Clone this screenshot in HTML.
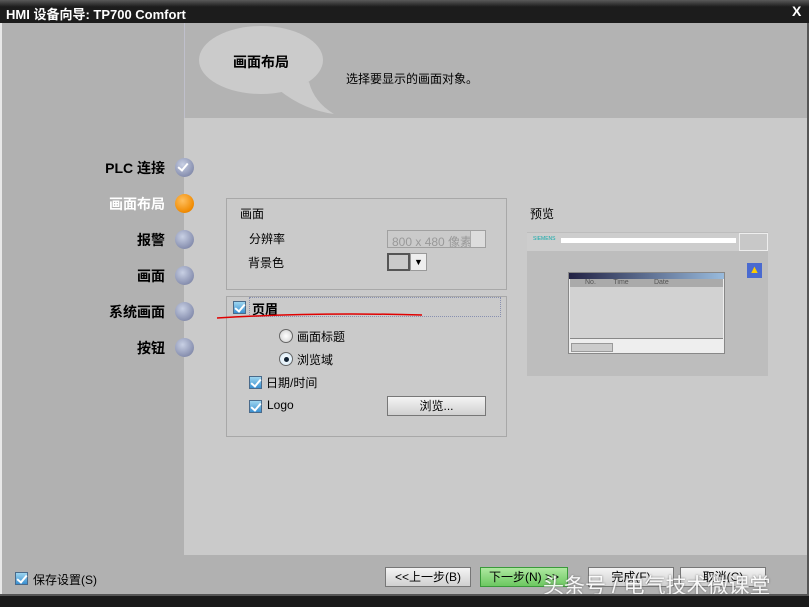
<!DOCTYPE html>
<html><head><meta charset="utf-8"><style>
*{margin:0;padding:0;box-sizing:border-box}
body{width:809px;height:607px;position:relative;overflow:hidden;background:#b1b1b1;font-family:"Liberation Sans","Noto Sans CJK SC",sans-serif;font-size:12px;color:#000}
.a{position:absolute}
.cb{position:absolute;width:13px;height:13px;border:1px solid #4a6a8a;background:linear-gradient(#9ed6f0,#3a8fd0);}
.cb:after{content:"";position:absolute;left:3px;top:0px;width:4px;height:8px;border:solid #fff;border-width:0 2px 2px 0;transform:rotate(40deg)}
.dot{position:absolute;width:19px;height:19px;border-radius:50%;background:radial-gradient(circle at 40% 35%,#c8d0e4,#8890b0 70%,#6a7090)}
.step{position:absolute;right:644px;font-weight:bold;font-size:14px;text-align:right;white-space:nowrap}
.btn{position:absolute;height:20px;border:1px solid #777;background:linear-gradient(#f4f4f4,#d0d0d0);text-align:center;line-height:18px;font-size:12px}
</style></head><body>
<div class="a" style="left:0;top:0;width:809px;height:23px;background:linear-gradient(#5a5a5a,#1c1c1c 30%,#1c1c1c)"></div>
<div class="a" style="left:6px;top:4px;color:#fff;font-weight:bold;font-size:13px">HMI 设备向导: TP700 Comfort</div>
<div class="a" style="left:792px;top:3px;color:#fff;font-weight:bold;font-size:14px">X</div>
<div class="a" style="left:0;top:23px;width:2px;height:571px;background:#e8e8e8"></div>
<div class="a" style="left:807px;top:23px;width:2px;height:571px;background:#555"></div>
<div class="a" style="left:184px;top:23px;width:623px;height:95px;background:#b3b3b3;border-left:1px solid #c0c0cc"></div>
<svg class="a" style="left:184px;top:24px" width="160" height="92"><ellipse cx="77" cy="36" rx="62" ry="34" fill="#cbcbcb"/><path d="M125 58 Q130 78 150 90 Q120 86 95 66 Z" fill="#cbcbcb"/></svg>
<div class="a" style="left:233px;top:52px;font-size:14px;font-weight:bold">画面布局</div>
<div class="a" style="left:346px;top:70px">选择要显示的画面对象。</div>
<div class="a" style="left:184px;top:118px;width:623px;height:437px;background:#cacaca"></div>
<div class="step" style="top:158px">PLC 连接</div>
<div class="step" style="top:194px;color:#fff">画面布局</div>
<div class="step" style="top:230px">报警</div>
<div class="step" style="top:266px">画面</div>
<div class="step" style="top:302px">系统画面</div>
<div class="step" style="top:338px">按钮</div>
<div class="dot" style="left:175px;top:158px"></div>
<div class="a" style="left:180px;top:161px;width:6px;height:10px;border:solid #fff;border-width:0 2px 2px 0;transform:rotate(40deg)"></div>
<div class="dot" style="left:175px;top:194px;background:radial-gradient(circle at 40% 35%,#ffc060,#f08a00 70%,#c06000)"></div>
<div class="dot" style="left:175px;top:230px"></div>
<div class="dot" style="left:175px;top:266px"></div>
<div class="dot" style="left:175px;top:302px"></div>
<div class="dot" style="left:175px;top:338px"></div>
<div class="a" style="left:226px;top:198px;width:281px;height:92px;border:1px solid #a8a8a8"></div>
<div class="a" style="left:240px;top:205px">画面</div>
<div class="a" style="left:249px;top:230px">分辨率</div>
<div class="a" style="left:387px;top:230px;width:99px;height:18px;border:1px solid #a0a0a0;color:#999;font-size:12px;padding:2px 4px;background:#cacaca;overflow:hidden;white-space:nowrap">800 x 480 像素</div>
<div class="a" style="left:470px;top:231px;width:15px;height:16px;background:#ddd;border-left:1px solid #aaa"></div>
<div class="a" style="left:248px;top:254px">背景色</div>
<div class="a" style="left:387px;top:253px;width:23px;height:18px;border:2px solid #555;background:#cacaca"></div>
<div class="a" style="left:410px;top:253px;width:17px;height:18px;border:1px solid #999;background:#eee;text-align:center;font-size:9px;line-height:16px">▼</div>
<div class="a" style="left:226px;top:296px;width:281px;height:141px;border:1px solid #a8a8a8"></div>
<div class="a" style="left:249px;top:297px;width:252px;height:20px;border:1px dotted #8890b0"></div>
<div class="cb" style="left:233px;top:301px"></div>
<div class="a" style="left:252px;top:299px;font-weight:bold;font-size:13px">页眉</div>
<svg class="a" style="left:215px;top:310px" width="210" height="12"><path d="M2 8 Q100 2 207 5" stroke="#e00000" stroke-width="1.5" fill="none"/></svg>
<div class="a" style="left:279px;top:329px;width:14px;height:14px;border-radius:50%;border:1px solid #666;background:radial-gradient(#fff,#ccc)"></div>
<div class="a" style="left:297px;top:328px">画面标题</div>
<div class="a" style="left:279px;top:352px;width:14px;height:14px;border-radius:50%;border:1px solid #666;background:radial-gradient(#fff,#cfe6f5)"></div>
<div class="a" style="left:284px;top:357px;width:5px;height:5px;border-radius:50%;background:#123"></div>
<div class="a" style="left:297px;top:351px">浏览域</div>
<div class="cb" style="left:249px;top:376px"></div>
<div class="a" style="left:266px;top:374px">日期/时间</div>
<div class="cb" style="left:249px;top:400px"></div>
<div class="a" style="left:267px;top:398px">Logo</div>
<div class="btn" style="left:387px;top:396px;width:99px">浏览...</div>
<div class="a" style="left:530px;top:205px">预览</div>
<div class="a" style="left:527px;top:232px;width:241px;height:144px;background:#bdbdbd"></div>
<div class="a" style="left:527px;top:233px;width:241px;height:18px;background:#cdcdcd"></div>
<div class="a" style="left:533px;top:236px;font-size:5px;color:#1aa">SIEMENS</div>
<div class="a" style="left:561px;top:238px;width:175px;height:5px;background:#fff"></div>
<div class="a" style="left:739px;top:233px;width:29px;height:18px;border:1px solid #eee;background:#c8c8c8"></div>
<div class="a" style="left:747px;top:263px;width:15px;height:15px;background:#4a6ad0"></div>
<div class="a" style="left:749px;top:264px;font-size:11px;color:#fc0;font-weight:bold">▲</div>
<div class="a" style="left:568px;top:272px;width:157px;height:82px;border:1px solid #888;background:#eee"></div>
<div class="a" style="left:569px;top:273px;width:155px;height:6px;background:linear-gradient(90deg,#224,#9bd)"></div>
<div class="a" style="left:570px;top:279px;width:153px;height:8px;background:#aaa;font-size:7px;color:#555;padding-left:15px">No.&nbsp;&nbsp;&nbsp;&nbsp;&nbsp;&nbsp;&nbsp;&nbsp;&nbsp;Time&nbsp;&nbsp;&nbsp;&nbsp;&nbsp;&nbsp;&nbsp;&nbsp;&nbsp;&nbsp;&nbsp;&nbsp;&nbsp;Date</div>
<div class="a" style="left:570px;top:287px;width:153px;height:52px;background:#d2d2d2;border-bottom:1px solid #888"></div>
<div class="a" style="left:571px;top:343px;width:42px;height:9px;background:#ccc;border:1px solid #999"></div>
<div class="a" style="left:184px;top:555px;width:623px;height:39px;background:#b1b1b1"></div>
<div class="cb" style="left:15px;top:572px"></div>
<div class="a" style="left:33px;top:571px">保存设置(S)</div>
<div class="btn" style="left:385px;top:567px;width:86px">&lt;&lt;上一步(B)</div>
<div class="btn" style="left:480px;top:567px;width:88px;background:linear-gradient(#aee8a0,#6cc860);border-color:#3a9a3a">下一步(N) &gt;&gt;</div>
<div class="btn" style="left:588px;top:567px;width:86px">完成(F)</div>
<div class="btn" style="left:680px;top:567px;width:86px">取消(C)</div>
<div class="a" style="left:543px;top:570px;font-size:21px;color:#fff;opacity:.9;text-shadow:0 0 2px #666">头条号 / 电气技术微课堂</div>
<div class="a" style="left:0;top:594px;width:809px;height:13px;background:#1a1a1a;border-top:2px solid #555"></div>
</body></html>
